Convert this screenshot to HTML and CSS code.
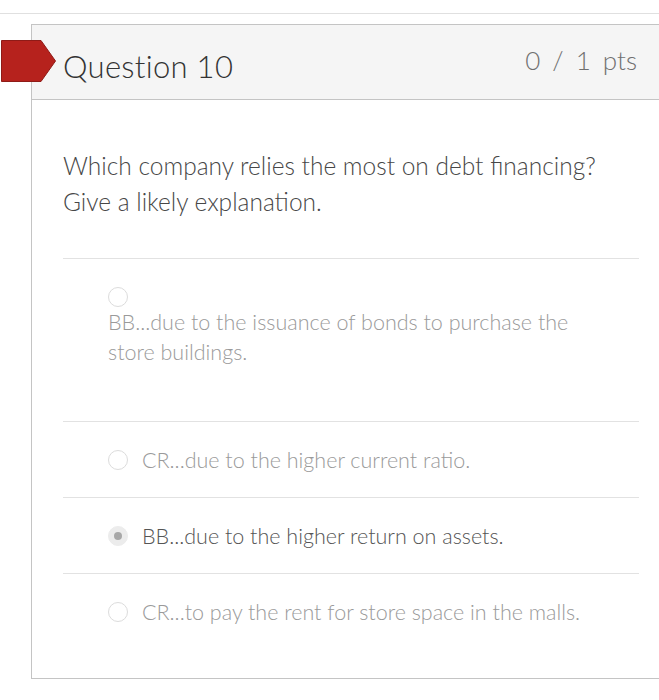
FILE: index.html
```
<!DOCTYPE html>
<html>
<head>
<meta charset="utf-8">
<link rel="stylesheet" href="styles.css">
</head>
<body>
<div class="topline"></div>
<div class="card">
  <svg class="flag" width="56" height="42" viewBox="0 0 56 42"><polygon points="0.5,0.5 40,0.5 54.5,21 40,41.5 0.5,41.5" fill="#b6221d" stroke="#8f1b17" stroke-width="1"/></svg>
  <div class="header">
    <div class="title">Question 10</div>
    <div class="pts">0 / 1 pts</div>
  </div>
  <div class="body">
    <div class="qtext">Which company relies the most on debt financing? Give a likely explanation.</div>
    <div class="answers">
      <div class="answer first">
        <span class="radio"></span>
        <div class="label">BB...due to the issuance of bonds to purchase the store buildings.</div>
      </div>
      <div class="answer">
        <span class="radio"></span>
        <div class="label">CR...due to the higher current ratio.</div>
      </div>
      <div class="answer selected">
        <span class="radio checked"></span>
        <div class="label">BB...due to the higher return on assets.</div>
      </div>
      <div class="answer">
        <span class="radio"></span>
        <div class="label">CR...to pay the rent for store space in the malls.</div>
      </div>
    </div>
  </div>
</div>
</body>
</html>
```
FILE: styles.css
```
html, body {
  margin: 0;
  padding: 0;
  background: #ffffff;
  overflow: hidden;
}
body {
  font-family: Lato, "Open Sans", "Liberation Sans", sans-serif;
  width: 659px;
  height: 700px;
}
.topline {
  margin-top: 13px;
  height: 1px;
  background: #e0e0e0;
}
.card {
  position: relative;
  margin-top: 10px;
  margin-left: 31px;
  border: 1px solid #c4c4c4;
  border-right: none;
}
.flag {
  position: absolute;
  left: -31px;
  top: 15px;
}
.header {
  display: flex;
  justify-content: space-between;
  align-items: flex-start;
  height: 75px;
  box-sizing: border-box;
  padding: 17px 22px 0 31px;
  background: #f5f5f5;
  border-bottom: 1px solid #c4c4c4;
}
.title {
  font-size: 31px;
  font-weight: 300;
  line-height: 40px;
  color: #333;
  padding-top: 4px;
  letter-spacing: 0.3px;
}
.pts {
  font-size: 26px;
  font-weight: 300;
  line-height: 36px;
  color: #707070;
  word-spacing: 5px;
}
.body {
  padding: 48px 20px 29px 31px;
}
.qtext {
  font-size: 24.5px;
  font-weight: 300;
  line-height: 36px;
  color: #474747;
  padding-right: 10px;
}
.answers {
  margin-top: 38px;
  border-top: 1px solid #e2e2e2;
}
.answer {
  display: flex;
  align-items: center;
  padding: 23px 0 22px 45px;
  border-bottom: 1px solid #e2e2e2;
}
.answer:last-child {
  border-bottom: none;
}
.answer.first {
  flex-direction: column;
  align-items: flex-start;
  padding-top: 28px;
  padding-bottom: 54px;
}
.radio {
  flex: none;
  width: 18px;
  height: 18px;
  border: 1.5px solid #dcdcdc;
  border-radius: 50%;
  margin-right: 14px;
  box-sizing: content-box;
}
.radio.checked {
  background: #ececec;
  border-color: #ececec;
  position: relative;
}
.radio.checked::after {
  content: "";
  position: absolute;
  left: 5px;
  top: 5px;
  width: 8px;
  height: 8px;
  border-radius: 50%;
  background: #a8a8a8;
}
.label {
  font-size: 21.5px;
  font-weight: 300;
  line-height: 30px;
  color: #9a9a9a;
}
.answer.first .label {
  max-width: 480px;
}
.answer.selected .label {
  color: #555;
}
```
